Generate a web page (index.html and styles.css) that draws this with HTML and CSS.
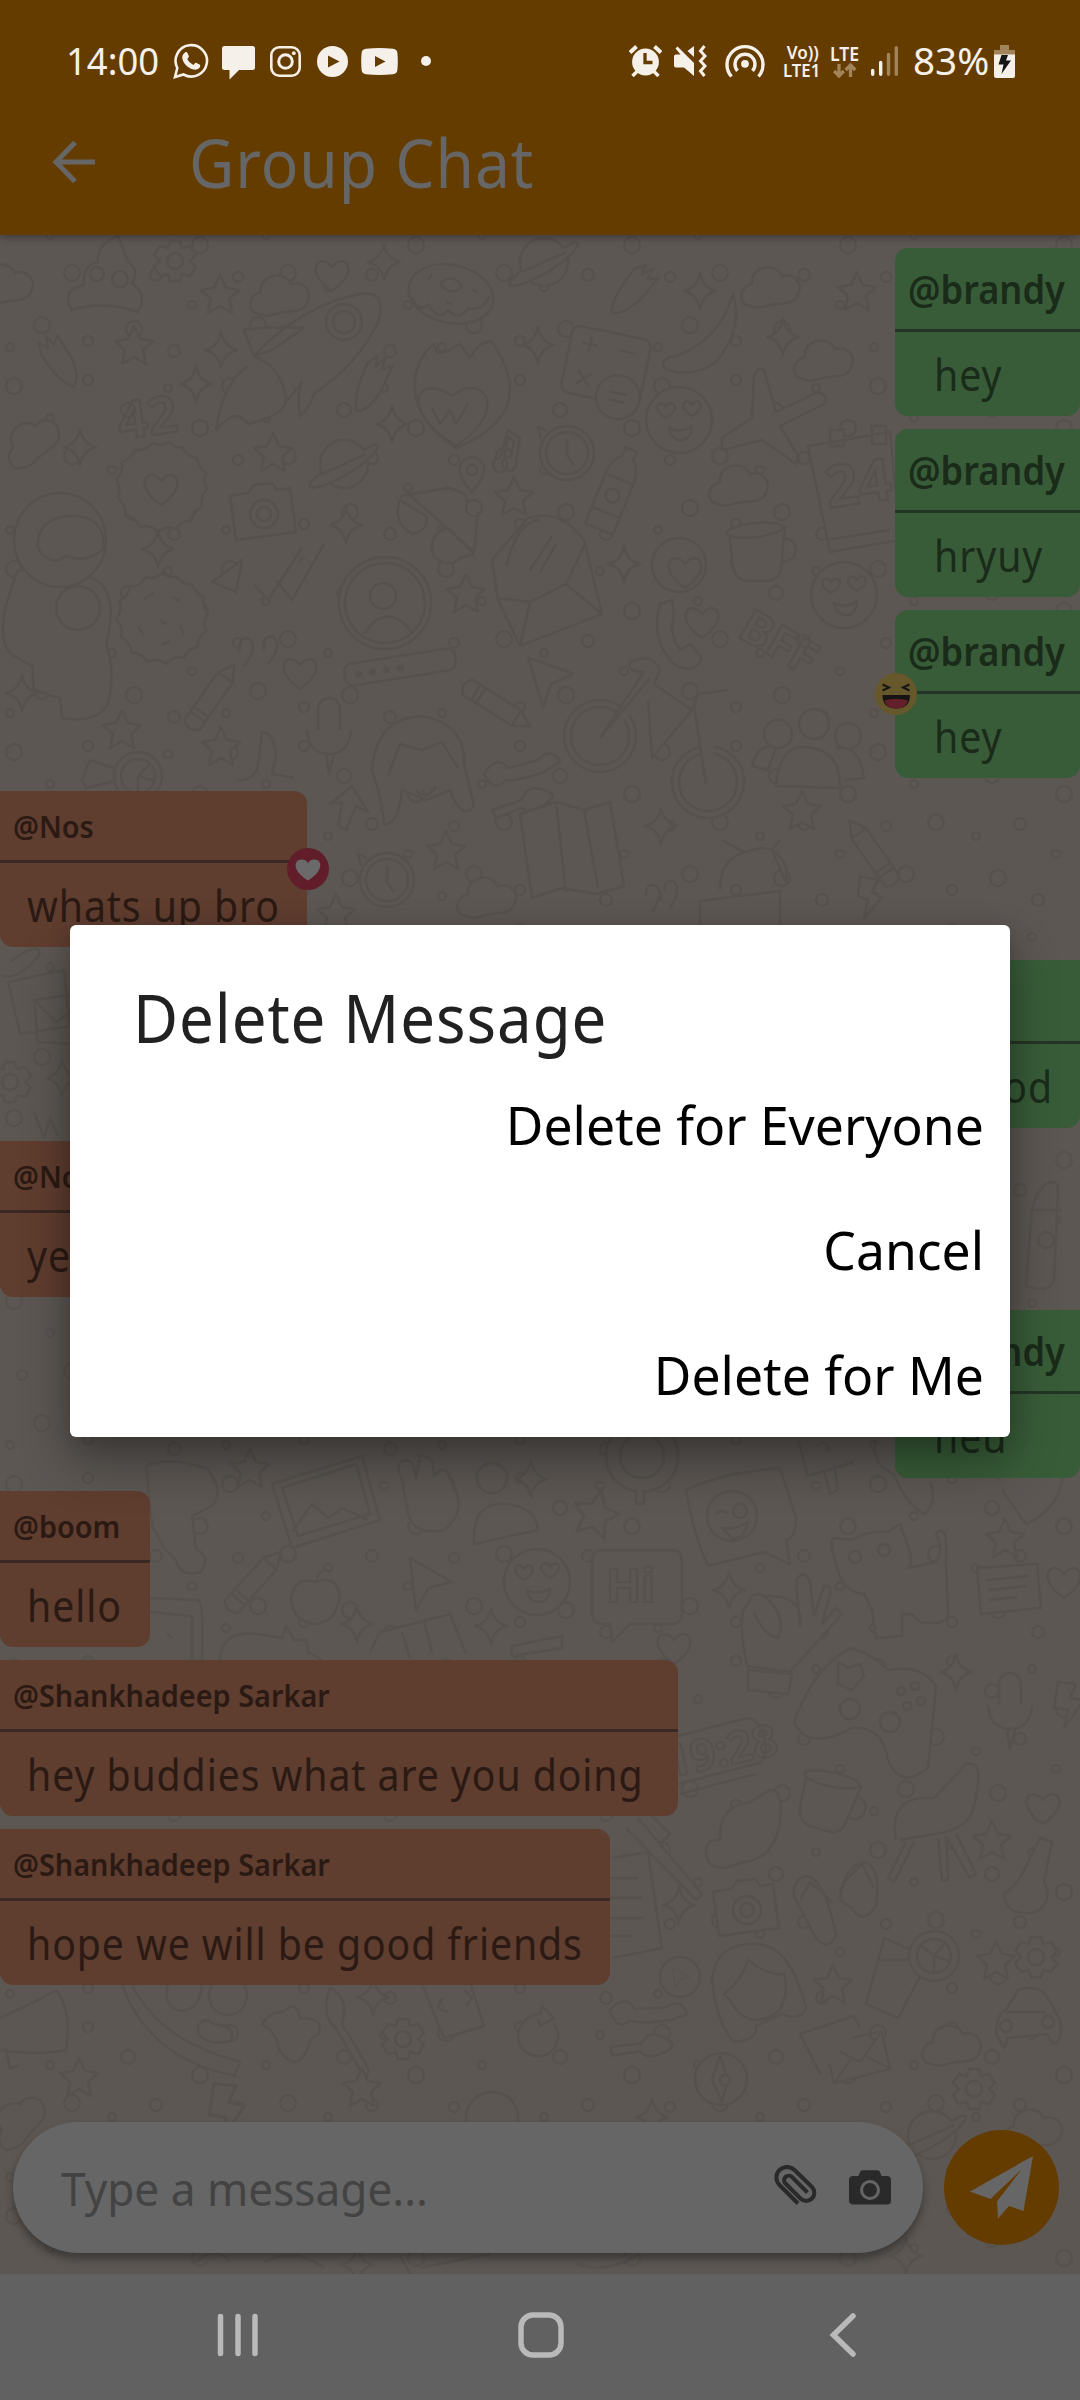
FILE: index.html
```html
<!DOCTYPE html>
<html lang="en">
<head>
<meta charset="utf-8">
<title>Group Chat</title>
<link rel="stylesheet" href="styles.css">
</head>
<body>
<div class="screen">
  <header class="top">
    <div class="status">
      <span class="clock"><span class="t t-clock">14:00</span></span>
      <svg class="i-wa" width="36" height="36" viewBox="0 0 36 36"><path d="M2 34l2.300-9A15.700 15.700 0 1 1 10.500 31.500z" fill="none" stroke="#f5f0ea" stroke-width="2.600"/><path d="M12 9.500c1-.8 2-.4 2.500.6l1.300 3c.3.900-.2 1.500-1.500 3 1.500 3 3.500 4.600 6.300 5.900 1.500-1.900 2-2.400 2.900-2l3.100 1.600c.9.500.7 1.700.2 2.700-1 1.900-3.600 2.800-6 2.300C14.500 25.200 9.500 19.500 9.200 14.500c0-2 1.200-4 2.800-5z" fill="#f5f0ea"/></svg>
      <svg class="i-msg" width="33" height="34" viewBox="0 0 33 34"><path d="M2.500 0h28Q33 0 33 2.500V21.500Q33 24 30.500 24H17L7.500 33.500V24H2.500Q0 24 0 21.500V2.500Q0 0 2.500 0z" fill="#f5f0ea"/></svg>
      <svg class="i-ig" width="31" height="31" viewBox="0 0 31 31" fill="none" stroke="#f5f0ea"><rect x="1.300" y="1.300" width="28.400" height="28.400" rx="8" stroke-width="2.600"/><circle cx="15.500" cy="15.500" r="6.800" stroke-width="3"/><circle cx="23.800" cy="7.200" r="1.900" fill="#f5f0ea" stroke="none"/></svg>
      <svg class="i-pl" width="31" height="31" viewBox="0 0 31 31"><circle cx="15.500" cy="15.500" r="15.500" fill="#f5f0ea"/><path d="M11 9.500L22.500 15.500 11 21.500z" fill="#653c00"/></svg>
      <svg class="i-yt" width="37" height="27" viewBox="0 0 37 27"><path d="M5 .8Q18.500-.6 32 .8 36 1.200 36.400 5 37.200 13.500 36.400 22 36 25.800 32 26.200 18.500 27.600 5 26.200 1 25.800.6 22-.2 13.500.6 5 1 1.200 5 .8z" fill="#f5f0ea"/><path d="M14 8L24.500 13.500 14 19z" fill="#653c00"/></svg>
      <i class="dot"></i>
      <span class="grow"></span>
      <svg class="i-al" width="33" height="32" viewBox="0 0 33 32"><circle cx="16.500" cy="17" r="13.400" fill="#f5f0ea"/><path d="M8.500 26l-5 5M24.500 26l5 5" stroke="#f5f0ea" stroke-width="3.500"/><path d="M1 7.500L7.500 1.500M32 7.500L25.500 1.500" stroke="#f5f0ea" stroke-width="4"/><path d="M16 8v9.500h7.500" stroke="#653c00" stroke-width="3.300" fill="none"/></svg>
      <svg class="i-mu" width="33" height="32" viewBox="0 0 33 32"><path d="M0 11.500Q0 9.500 2 9.500H6.500L1.500 3.500 3.500 1.500 20 18V31L10 22.500H2Q0 22.500 0 20.500zM20 1V12L13.500 6z" fill="#f5f0ea"/><path d="M30.500 1L26.500 6l4.500 5-4.500 5 4.500 5-4.500 5 4 5" fill="none" stroke="#f5f0ea" stroke-width="3"/></svg>
      <svg class="i-ho" width="40" height="34" viewBox="0 0 40 34" fill="none" stroke="#f5f0ea" stroke-width="3.400"><path d="M6.500 32.500A18 18 0 1 1 33.500 32.500"/><path d="M12.500 26.800A10 10 0 1 1 27.500 26.800"/><circle cx="20" cy="19.800" r="3.900" fill="#f5f0ea" stroke="none"/></svg>
      <span class="volte"><span class="t t-vo">Vo))</span><span class="t t-lte1">LTE1</span></span>
      <span class="lte"><span class="t t-lte">LTE</span>
      <svg width="24" height="15" viewBox="0 0 24 15"><path d="M6 1v12M1.200 8L6 13l4.800-5M17.500 14V2M12.700 7l4.800-5 4.800 5" fill="none" stroke="#a1845a" stroke-width="3.300"/></svg></span>
      <svg class="i-sg" width="27" height="30" viewBox="0 0 27 30" stroke-width="3.400" stroke-linecap="round"><path d="M1.700 24.500V28.300M9.700 16.500V28.300" stroke="#f5f0ea"/><path d="M17.500 8.500V28.300M25.300 1.800V28.300" stroke="#a1845a"/></svg>
      <span class="pct"><span class="t t-pct">83%</span></span>
      <svg class="i-ba" width="21" height="33" viewBox="0 0 21 33"><path d="M6 0h9v5h6v5H0V5h6z" fill="#a1845a"/><path d="M0 9.500H21V31q0 2-2 2H2q-2 0-2-2z" fill="#f5f0ea"/><path d="M7.500 10h6.500l-2 5.500h5L7.500 29l2-9.500H4.500z" fill="#151515"/></svg>
    </div>
    <div class="bar">
      <svg class="back" width="44" height="44" viewBox="0 0 44 44"><path d="M23 2.500L4 22 23 41.500M4 22H43" fill="none" stroke="#666" stroke-width="5"/></svg>
      <span class="t t-title">Group Chat</span>
    </div>
  </header>

  <main class="chat">
    <svg class="paper" width="1080" height="2039" viewBox="0 235 1080 2039">
      <defs>
        <pattern id="dots" width="216" height="183" patternUnits="userSpaceOnUse"><g class="ln"><circle cx="14" cy="20" r="8"/><circle cx="50" cy="52" r="4"/><circle cx="88" cy="14" r="5"/><circle cx="128" cy="44" r="7"/><circle cx="168" cy="22" r="4"/><circle cx="200" cy="62" r="8"/><circle cx="22" cy="94" r="5"/><circle cx="72" cy="90" r="8"/><circle cx="112" cy="104" r="4"/><circle cx="156" cy="92" r="6"/><circle cx="192" cy="122" r="4"/><circle cx="42" cy="142" r="8"/><circle cx="88" cy="158" r="5"/><circle cx="134" cy="146" r="8"/><circle cx="174" cy="168" r="6"/><circle cx="10" cy="164" r="4"/></g></pattern>
        <g id="cloud"><path d="M-22 18C-36 16-32-2-20-4-22-22 4-26 10-12 24-16 32-2 26 6 24 18 4 14-6 18-12 20-18 20-22 18z"/></g>
        <g id="star"><path d="M0-19L6-6 19-4 9 5 12 19 0 12-12 19-9 5-19-4-6-6z"/></g>
        <g id="spark"><path d="M0-18Q3-3 16 0 3 3 0 18-3 3-16 0-3-3 0-18z"/></g>
        <g id="heart"><path d="M0 16C-30-4-12-24 0-8 12-24 30-4 0 16z"/></g>
        <g id="planet"><circle r="24"/><path d="M-22 8C-46 26-34 30 0 12 36-8 44-30 20-14M-22 10L22-10"/></g>
        <g id="smile"><circle r="33"/><path d="M-13-2C-30-12-18-22-13-13-8-22 4-12-13-2zM13-4C-4-14 8-24 13-15 18-24 30-14 13-4zM-10 8Q2 14 13 6 12 20 2 20-8 20-10 8z"/></g>
        <g id="camera"><path d="M-32-16L-14-19-8-27 10-29 15-22 28-24 34 20-26 28z"/><circle cx="2" cy="2" r="14"/><circle cx="2" cy="2" r="7"/></g>
        <g id="clockd"><circle r="27"/><circle r="21"/><path d="M0-14V2L7 12M-20-22l-9-4 3 12"/></g>
        <g id="gear"><path d="M-5-20h10l2 7 8-2 6 9-6 6 6 6-6 9-8-2-2 7h-10l-2-7-8 2-6-9 6-6-6-6 6-9 8 2z"/><circle r="8"/></g>
        <g id="pencil"><path d="M-9-30L0-46 9-30V28Q0 36-9 28zM-9-30H9M-9 18H9M-9 12H9"/></g>
        <g id="cup"><path d="M-28-20L28-26 24 16Q22 28 6 28L-10 28Q-22 26-24 14zM27-14C44-16 42 12 25 8"/><ellipse cy="-23" rx="28" ry="7" transform="rotate(-6)"/></g>
        <g id="env"><path d="M-36-20L36-26 40 22-32 30zM-36-20L4 8 36-26M-32 30L-6 2M40 22L12 2"/></g>
        <g id="mic"><rect x="-11" y="-32" width="22" height="44" rx="11"/><path d="M-22 0Q-20 24 0 24 20 24 22 0M-3 24L0 44 5 24"/></g>
        <g id="tools"><path d="M-38 4Q-26-16-14-2L16-10Q30-24 38-8L22 2Q-8 12-16 10-28 24-38 4zM-30 40L0 30Q4 14 22 20 38 24 24 34 8 46 0 38L-26 48z"/></g>
        <g id="cursor"><path d="M-18-24L24 0 0 6-12 28z"/></g>
        <g id="note"><path d="M-30-20L30-24 34 20-26 26zM-20-8L22-12M-19 2L20-2M-18 12L10 9"/></g>
        <g id="bolt"><path d="M-10-22L8-20 2-6 16-4-4 24 0 6-14 4z"/></g>
        <g id="cookie"><path d="M0-46Q8-40 14-43 20-34 30-35 33-26 42-22 40-12 46-6 40 2 44 12 36 18 35 28 26 29 22 39 12 36 4 45-4 38-14 43-20 34-30 34-31 24-41 18-38 8-46 0-39-8-43-18-34-22-32-32-22-32-16-42-8-39 0-46z"/></g>
        <g id="chips"><path d="M-18-20l10-6M10-22l8 4M-24 8l6 8M18 6l4 10M-2 0l6 6M0 26l8-4"/></g>
      </defs>
      <rect y="235" width="1080" height="2039" fill="#5c5753"/>
      <rect y="235" width="1080" height="2039" fill="url(#dots)"/>
      <g class="ln fl">
        <use href="#cloud" x="5" y="285"/><path d="M72 310Q60 290 84 285 82 265 98 262 96 245 118 236 124 250 128 262 140 270 132 284 148 292 138 312 104 300 72 310z"/><circle cx="97" cy="274" r="7"/><circle cx="120" cy="279" r="8"/><use href="#gear" x="175" y="261"/><use href="#cloud" x="281" y="296"/><use href="#star" x="220" y="294"/><use href="#heart" x="332" y="275"/><use href="#spark" x="384" y="262"/>
        <ellipse cx="451" cy="294" rx="43" ry="29" transform="rotate(12 451 294)"/><path d="M412 298q8 16 16 6 10 18 20 6 12 12 20-2 14 4 22-12M440 284q12-12 22 2-10 12-22-2M428 280l4-6M472 290l6 2M446 302l6 2"/>
        <use href="#planet" x="544" y="262"/><g transform="translate(631 292) rotate(40)"><path d="M-12-20L-6-30-3-20 2-32 4-20 12-28 12 0Q8 26-2 28-12 14-12-20z"/></g><use href="#spark" x="700" y="291"/><use href="#cloud" x="772" y="288"/><use href="#star" x="857" y="291"/>
        <g transform="translate(60 362) rotate(-32)"><path d="M-12-16L-8-28-3-18 2-30 4-18 12-24 12 4Q8 26-2 28-12 14-12-16z"/></g><use href="#star" x="134" y="345"/><use href="#spark" x="221" y="350"/>
        <path d="M254 356Q300 306 360 294 388 290 378 322 360 362 314 394 310 408 300 416 296 396 302 382L286 402Q284 368 254 356zM254 356L244 330Q272 326 304 328L272 350zM248 366Q222 384 216 430 236 406 248 424 282 416 286 402"/><circle cx="344" cy="322" r="18"/><circle cx="344" cy="322" r="11"/>
        <g transform="translate(370 386) rotate(25)"><path d="M-12-20L-6-30-3-20 2-32 4-20 12-28 12 0Q8 26-2 28-12 14-12-20z"/></g>
        <path d="M456 448C400 412 410 362 434 344 436 360 446 352 460 344L470 358Q480 340 492 342 520 382 504 412 488 436 456 448z"/><path d="M456 446C396 408 418 372 452 396 482 372 512 408 456 446zM432 408l8 16 10-14 6 14 12-20"/>
        <use href="#spark" x="538" y="345"/><g transform="translate(606 366) rotate(12)"><rect x="-40" y="-34" width="80" height="68" rx="8"/><path d="M-28-18h16M-20-26v16M10-18h16M-26 10l14 14M-12 10L-26 24"/><circle cx="18" cy="28" r="22"/><path d="M10 24h16M10 32h16"/></g>
        <path d="M733 294Q744 328 716 362 690 380 664 368 660 358 676 356 720 340 733 294z"/><use href="#spark" x="783" y="337"/><use href="#cloud" x="825" y="361"/><use href="#cloud" x="33" y="441" transform="rotate(-30 33 441)"/><use href="#spark" x="80" y="447"/><use href="#spark" x="196" y="384"/><use href="#star" x="273" y="452"/><use href="#planet" x="344" y="464"/><use href="#spark" x="392" y="424"/>
        <path d="M500 458l8-28 12 8-4 24a7 7 0 1 1-5-5l3-16-6-4-4 22a7 7 0 1 1-4-1z"/><use href="#clockd" x="567" y="453"/><path d="M472 492Q452 470 464 460 476 452 484 466 486 476 472 492z"/><circle cx="472" cy="470" r="5"/><use href="#smile" x="679" y="420"/>
        <path d="M764 370Q758 366 754 376L752 418 722 438 722 450 762 440 796 464 798 456 780 426 824 404Q830 396 818 392L776 412z"/>
        <path d="M808 446L890 432 900 540 830 552zM826 540L890 530M830 430h14v16h-14zM872 426h14v18h-14z"/><use href="#cookie" x="161" y="487" transform="rotate(10 161 487)"/><use href="#heart" x="161" y="489"/><use href="#camera" x="262" y="512"/>
        <path d="M400 496l48-8q22 4 18 14M478 512l-4 40M400 500q-8 22 12 34 18-4 14-18zM448 528q-22 6-14 28 14 14 26 2l14-4zM404 490L474 552"/><use href="#star" x="514" y="496"/><g transform="translate(614 492) rotate(22)"><path d="M-15-14Q-14-32-6-36V-46H6V-36Q14-32 15-14V40H-15zM-15-14H15M-15 22H15"/><circle r="7" cy="4"/></g><use href="#cloud" x="740" y="486"/><use href="#cup" x="757" y="553"/>
        <path d="M18 570Q-10 640 14 656L32 666 34 690 60 698 62 718Q96 724 108 704 116 670 106 644 120 590 92 578z"/><ellipse cx="60" cy="540" rx="46" ry="47"/><path d="M38 548Q36 518 70 516 104 514 104 548 88 564 66 556 50 568 38 548z"/><circle cx="78" cy="608" r="22"/><use href="#spark" x="346" y="525"/><use href="#spark" x="158" y="549"/><use href="#cookie" x="162" y="619"/><use href="#chips" x="162" y="619"/>
        <path d="M254 584l14 16 34-52M276 580l16 20 32-56M242 560l-30 22 24 10z"/><circle cx="385" cy="603" r="46"/><circle cx="385" cy="603" r="40"/><circle cx="383" cy="596" r="13"/><path d="M364 634Q386 600 412 632"/><use href="#star" x="466" y="593"/>
        <path d="M498 600L492 560 528 518Q560 508 584 540L602 614 520 646zM498 598L530 602 566 584 602 614M530 602L520 646M566 584L584 546M506 566Q518 520 540 520M530 570l22-34M540 572l16-28"/><use href="#spark" x="624" y="564"/><circle cx="679" cy="565" r="27"/><use href="#heart" x="685" y="572"/><use href="#smile" x="844" y="595"/>
        <path d="M660 604Q650 640 674 664 694 676 702 658L690 644 680 650Q668 632 674 616L672 600z"/><use href="#heart" x="702" y="622"/><path d="M240 652q-2-14 8-14 12 8-4 28M264 650q-2-14 8-14 12 8-4 28"/><use href="#heart" x="300" y="673"/><use href="#pencil" transform="translate(208 702) rotate(35)"/><rect x="344" y="656" width="112" height="22" rx="8" transform="rotate(-9 400 667)"/><path d="M358 674h1M372 672h1M386 670h1M400 668h1" stroke-width="6" stroke-linecap="round"/><use href="#pencil" transform="translate(491 702) rotate(122)"/><use href="#cursor" transform="translate(550 678) rotate(-10)"/>
        <circle cx="600" cy="736" r="36"/><circle cx="600" cy="736" r="29"/><circle cx="708" cy="782" r="36"/><circle cx="708" cy="782" r="29"/><path d="M600 738l44-66q-18 0-14-10 22-10 30 8l-6 14 38 26-40 48-4-58M706 784l-12-78 4-12 30-4M600 738l50-60"/><use href="#mic" x="329" y="730"/><use href="#spark" x="22" y="693"/><use href="#star" x="122" y="729"/><use href="#star" x="221" y="746"/>
        <path d="M372 770Q376 718 422 716 466 724 464 764L474 806Q462 822 450 790L426 800 402 790Q398 826 384 824 382 800 372 770zM388 776l12-32 22 6 20-8 16 26M416 790q10 12 20-4"/><use href="#tools" x="522" y="770"/><circle cx="778" cy="734" r="14"/><circle cx="814" cy="724" r="15"/><circle cx="848" cy="736" r="13"/><path d="M776 786Q780 740 812 748 840 752 840 788zM752 766Q758 742 776 748L768 770zM836 748q24-4 28 30l-20 2"/>
        <path d="M82 780l8-20 46 16-50 12z"/><circle cx="138" cy="776" r="24"/><circle cx="138" cy="776" r="17"/><path d="M138 776l12-12M138 776v17M138 776l17 5M236 780q18 2 22-14l4-34q12 0 14 24l-4 18 22 4"/><path d="M330 804l22-18 16 26-12-6-10 24-8-4 4-24z"/><path d="M520 814l36-12 28 8 26-8 14 84-28 8-34-6-30 10zM556 802l10 90M584 810l14 78"/><use href="#star" x="446" y="850"/><use href="#clockd" x="387" y="880"/><use href="#cloud" x="488" y="898"/><use href="#star" x="336" y="913"/><use href="#spark" x="661" y="826"/><path d="M720 890Q720 860 744 852L722 840M744 852Q764 846 772 850L780 840M772 850Q790 862 786 882z"/><use href="#star" x="802" y="810"/><use href="#pencil" transform="translate(876 858) rotate(-35)"/><path d="M646 896q0-14 10-10 8 8-4 26M664 892q0-14 10-10 8 8-4 26M700 925v-24l80-10v34M860 876l18 4-6 12 10 6-18 20 4-18-10-4z"/>
        <path d="M8 982l56-12 6 56-50 8zM34 1000l42-6v50l-38-2zM34 1000l22 22 20-14M10 962q28-22 30-8-20 26-38 22"/><use href="#gear" x="10" y="1082"/><use href="#spark" x="62" y="1078"/><path d="M34 1112l10 26 6-20 8 18"/><path d="M1046 1184q12-6 12 6l-4 90q-4 14-28 6l6-76q4-18 14-26zM1034 1210h28"/><circle cx="1046" cy="1240" r="8"/>
      </g>
      <g class="ln fl">
        <path d="M146 1466Q170 1456 206 1468 226 1490 212 1506L192 1516 196 1548Q212 1560 200 1572 180 1578 176 1560L164 1548 152 1526z"/><use href="#star" x="250" y="1468"/><path d="M272 1484l90-28 18 64-88 28zM282 1488l74-24 14 50-72 22zM292 1532l20-28 16 14 14-10 26 12"/><path d="M402 1480q-8-18 4-20 8 0 10 18l4-22q14-2 14 20 12-14 16 4 20 30-6 50-30 6-36-16z"/><circle cx="492" cy="1478" r="15"/><path d="M474 1544Q472 1502 504 1504 536 1506 538 1530z"/><use href="#spark" x="531" y="1479"/><use href="#star" transform="translate(596 1513) rotate(14) scale(1.200)"/><circle cx="642" cy="1456" r="36"/><circle cx="642" cy="1456" r="22"/><path d="M636 1490v14h8v-14M798 1440l10 36 46-14M824 1470l6 24 8-4-4-26M876 1440q-6 24 18 34 12 30 30 40 14-10 6-32M1000 1480q-16-8 2-24l60-12q10 60-36 80l-24-34"/>
        <path d="M686 1490Q724 1472 780 1468L796 1518Q796 1538 786 1540L790 1564 764 1552 708 1566Q692 1530 686 1490z"/><circle cx="732" cy="1516" r="25"/><circle cx="740" cy="1511" r="7"/><path d="M716 1514q6-6 12 0M722 1528q14 2 26-6-4 18-16 16z"/><use href="#smile" x="537" y="1582"/><path d="M602 1550h70q10 0 10 12v50q0 12-10 12h-42l-18 18-2-18h-8q-10 0-10-12v-50q0-12 10-12z"/><use href="#spark" x="729" y="1590"/>
        <path d="M747 1666Q736 1612 748 1604 752 1590 764 1596 804 1594 800 1626L796 1580Q804 1568 810 1582L814 1616 824 1586Q834 1584 828 1602L822 1624 836 1608 842 1614 790 1672zM748 1670l44 4-4 20-40-4zM764 1596q24 20 14 42-14-2-24-26"/><path d="M837 1566Q828 1540 834 1538L852 1540Q868 1530 888 1532L900 1524 908 1546Q914 1562 908 1568L936 1562Q944 1550 936 1534 948 1520 946 1560L948 1616Q944 1626 920 1622L912 1614 902 1614 902 1636 876 1638 872 1610 864 1594Q842 1592 837 1566z"/><circle cx="855" cy="1557" r="6"/><circle cx="884" cy="1550" r="6"/><use href="#note" x="1007" y="1588"/><use href="#star" x="1005" y="1538"/><use href="#heart" x="1064" y="1582"/>
        <path d="M794 1722Q812 1670 850 1648 870 1652 888 1670 922 1664 936 1686L928 1768Q900 1790 888 1760 884 1726 852 1728 808 1752 794 1722z"/><path d="M838 1662l10 6 12-4 4 12-12 14-14-6z"/><circle cx="850" cy="1709" r="10"/><circle cx="890" cy="1722" r="10"/><circle cx="901" cy="1691" r="4"/><circle cx="915" cy="1686" r="4"/><circle cx="907" cy="1706" r="4"/><circle cx="921" cy="1701" r="4"/><use href="#mic" x="1010" y="1705"/><use href="#bolt" x="1068" y="1704"/><use href="#spark" x="956" y="1672"/><path d="M670 1738l78-20q14 2 18 30 0 14-10 16l-78 20M680 1794l76-20"/>
        <use href="#cup" transform="translate(827 1802) rotate(18)"/><path d="M706 1852q0-14 14-12-2-34 30-38l20-12q14 0 10 30-4 38-36 42l-20 6q-18 0-18-16z"/><path d="M896 1840Q888 1794 934 1798L966 1764Q984 1760 976 1796 974 1830 934 1834L900 1840M906 1842l-18 36 6 4 20-40M938 1838l4 42h6l-2-44M956 1834l20 40-6 4-22-38"/><use href="#heart" x="1043" y="1808"/><use href="#star" x="992" y="1840"/><path d="M1040 1838l12 4-8 40q10 20-8 30-30 6-32-18 16-12 20-24z"/><path d="M638 1818l64 76-6 6-70-72M646 1810l24 24-8 8"/>
        <path d="M612 1858l36-6 14 96-50 10"/><path d="M610 1878h28M610 1898h32M610 1918h34M610 1936h22"/><use href="#spark" x="679" y="1905"/><use href="#camera" x="745" y="1908"/><path d="M794 1896q-2-18 14-20 18 6 28 60-8 16-20 2zM840 1900q4-34 24-38 18 4 12 44-14 20-24 2zM800 1900l10-18 22 20M842 1884l20-20 12 24"/><circle cx="680" cy="1977" r="20"/><use href="#cursor" transform="translate(680 1977) scale(.4)"/>
        <path d="M712 1980Q716 1942 756 1944 790 1944 806 2008 800 2022 782 2014L756 2026Q758 2040 734 2042 716 2022 712 1980z"/><path d="M724 1994q18-14 24-34 20 16 36 14 6 20-6 38-32 20-48-12z"/><use href="#star" x="833" y="1984"/><path d="M884 1938l46 20-32 60-32-14zM878 1960h48"/><circle cx="934" cy="1956" r="25"/><circle cx="934" cy="1956" r="17"/><path d="M934 1956l10-12M934 1956l16 5M934 1956v16M934 1956l-12-10"/><use href="#star" x="996" y="1960"/><use href="#gear" x="1036" y="1957"/>
        <path d="M996 2034Q996 2014 1006 2010L1018 1990Q1040 1982 1050 2002L1060 2020Q1064 2040 1054 2044L1046 2034 1008 2038 1004 2048zM1006 2012h40"/><circle cx="1006" cy="2026" r="6"/><circle cx="1048" cy="2022" r="6"/><use href="#cloud" x="953" y="2046"/><use href="#env" transform="translate(856 2056) rotate(-8) scale(.8)"/><path d="M820 2074l-20-40 54-18 6 12"/><circle cx="721" cy="2079" r="26"/><path d="M720 2056l8 24-6 22-10-22z"/><use href="#gear" x="974" y="2089"/><use href="#tools" transform="translate(648 2014) rotate(12)"/><path d="M524 2022a20 20 0 1 0 30 2M524 2022q6-8 16-8l2-8 12 12-14 8-2-7"/>
        <use href="#pencil" transform="translate(250 1586) rotate(42)"/><path d="M316 1582q20-8 24 14-4 26-24 28-22-2-25-24 2-24 25-18zM316 1582q4-16 14-10"/><use href="#cursor" x="428" y="1582"/><use href="#spark" x="357" y="1624"/><use href="#spark" x="491" y="1626"/><path d="M150 1598l48 2q6 2 4 60M150 1612l42 4v44M220 1660q0-30 38-26l24 4 4-12 8 14 12 0 2 12 14 8M370 1652l10-20 70-18 16 40M402 1632l8 26M424 1622l8 30M512 1646l50-10v12l-50 8z"/><use href="#heart" x="674" y="1648"/>
        <path d="M0 2018Q40 2000 56 1990 72 2010 66 2050 40 2056 0 2050M6 2048l4 20 8-2"/><path d="M122 1985Q150 2060 236 2076M132 1985Q160 2040 234 2060L240 2062 234 2076M168 1985q-6 22 14 26 18-2 20-26M198 2026q6-10 16-2 22 2 18 16-20 8-34-6z"/><circle cx="228" cy="1996" r="19"/><path d="M262 2024q10-14 22-12 12-14 16 6 26 0 18 16-10 6-10 14-12 28-30 0 0-14-16-24zM330 1988q20 10 12 36l24 40q6 14-4 10l-26-46q-16-12-6-40z"/><use href="#gear" x="403" y="2039"/><path d="M422 1984l48-2 14 44-40 12zM442 1998l-4 10 10 4M464 1990l8 8-6 8"/><use href="#spark" x="373" y="1997"/><use href="#star" x="79" y="2077"/><use href="#star" x="362" y="2087"/><use href="#bolt" transform="translate(226 2110) scale(1.200)"/><use href="#cloud" transform="translate(20 2120) rotate(-40)"/><use href="#planet" x="932" y="2135"/><use href="#cloud" x="1034" y="2130"/><circle cx="492" cy="2118" r="26"/><circle cx="725" cy="2080" r="5"/><use href="#spark" x="652" y="2117"/><use href="#spark" x="357" y="2265"/><path d="M400 2256l14 24M420 2268l70-14M196 2262q20-18 34 0M264 2262q30-16 60 6M576 2264q30 10 60-8"/><use href="#spark" x="906" y="2256"/>
      </g>
      <g class="wt"><text x="118" y="436" font-size="52" transform="rotate(-8 146 420)">42</text><text x="826" y="504" font-size="58" transform="rotate(-8 855 490)">24</text><text x="736" y="636" font-size="46" transform="rotate(30 736 636)">BFF</text><text x="606" y="1602" font-size="46">Hi</text><text x="664" y="1766" font-size="44" transform="rotate(-12 722 1747)">19:28</text></g>
    </svg>

    <div class="msgs">
      <div class="m out"><div class="who"><span class="t t-me">@brandy</span></div><div class="txt"><span class="t t-body">hey</span></div></div>
      <div class="m out"><div class="who"><span class="t t-me">@brandy</span></div><div class="txt"><span class="t t-body">hryuy</span></div></div>
      <div class="m out"><div class="who"><span class="t t-me">@brandy</span></div><div class="txt"><span class="t t-body">hey</span></div>
        <svg class="react r-left" width="42" height="42" viewBox="0 0 42 42"><circle cx="21" cy="21" r="21" fill="#66582a"/><path d="M7.500 11.500L14 14.500 7.500 17.500M34.500 11.500L28 14.500 34.500 17.500" fill="none" stroke="#151515" stroke-width="2"/><path d="M7.500 22H35Q35 35.500 21.200 35.500 7.500 35.500 7.500 22z" fill="#151515"/><path d="M9.500 27.500Q21 24 33 27.500 31 35.500 21.200 35.500 11.500 35.500 9.500 27.500z" fill="#64202a"/></svg></div>
      <div class="m in w1"><div class="who"><span class="t t-they">@Nos</span></div><div class="txt"><span class="t t-body">whats up bro</span></div>
        <svg class="react r-right" width="42" height="42" viewBox="0 0 42 42"><circle cx="21" cy="21" r="21" fill="#611d29"/><path d="M21 32.500C5 23 6.500 11.500 14.500 11.500 18 11.500 20 13 21 15.500 22 13 24 11.500 27.500 11.500 35.500 11.500 37 23 21 32.500z" fill="#6a6a6a"/></svg></div>
      <div class="m out w2"><div class="who"><span class="t t-me">@brandy</span></div><div class="txt"><span class="t t-body">good</span></div></div>
      <div class="m in w3"><div class="who"><span class="t t-they">@Nos</span></div><div class="txt"><span class="t t-body">yes</span></div></div>
      <div class="m out"><div class="who"><span class="t t-me">@brandy</span></div><div class="txt"><span class="t t-body">heu</span></div></div>
      <div class="m in w3"><div class="who"><span class="t t-they">@boom</span></div><div class="txt"><span class="t t-body">hello</span></div></div>
      <div class="m in w4"><div class="who"><span class="t t-they">@Shankhadeep Sarkar</span></div><div class="txt"><span class="t t-body">hey buddies what are you doing</span></div></div>
      <div class="m in w5"><div class="who"><span class="t t-they">@Shankhadeep Sarkar</span></div><div class="txt"><span class="t t-body">hope we will be good friends</span></div></div>
    </div>

    <div class="compose">
      <div class="field">
        <span class="t t-ph">Type a message...</span>
        <span class="grow"></span>
        <svg class="clip" width="44" height="42" viewBox="0 0 44 42"><path d="M24 38.500L5.500 20A10.500 10.500 0 0 1 20.500 5L38 22A8 8 0 0 1 26.500 33.500L11.500 18.500A4.500 4.500 0 0 1 18 12L33.500 27.500" fill="none" stroke="#2a2a2a" stroke-width="4"/></svg>
        <svg width="42" height="35" viewBox="0 0 42 35"><path d="M4 6H9.500L11 2Q11.800 .3 13.500 .3H28.500Q30.200 .3 31 2L32.500 6H38Q42 6 42 10V30.500Q42 34.500 38 34.500H4Q0 34.500 0 30.500V10Q0 6 4 6z" fill="#2a2a2a"/><circle cx="21" cy="20" r="8.500" fill="#2a2a2a" stroke="#666" stroke-width="3"/></svg>
      </div>
      <svg class="send" width="115" height="115" viewBox="0 0 115 115"><circle cx="57.500" cy="57.500" r="57.500" fill="#653c00"/><path d="M26 61.500L89 26 79.500 81 65 76 54 88.500 53 71.500 77.500 39.500 46.500 69z" fill="#666"/></svg>
    </div>
  </main>

  <nav class="nav">
    <svg width="42" height="46" viewBox="0 0 42 46" stroke="#b9b9b9" stroke-width="5.500" stroke-linecap="round"><path d="M3.500 4.500V41.500M21 4.500V41.500M38 4.500V41.500"/></svg>
    <svg class="home" width="48" height="48" viewBox="0 0 48 48"><rect x="4" y="4" width="40" height="40" rx="12" fill="none" stroke="#b9b9b9" stroke-width="5.500"/></svg>
    <svg width="28" height="46" viewBox="0 0 28 46"><path d="M24 4L4.500 23 24 42" fill="none" stroke="#b9b9b9" stroke-width="5.500" stroke-linecap="round"/></svg>
  </nav>

  <div class="dialog">
    <div class="dtitle"><span class="t t-dt">Delete Message</span></div>
    <div class="opt"><span class="t t-opt">Delete for Everyone</span></div>
    <div class="opt"><span class="t t-opt">Cancel</span></div>
    <div class="opt"><span class="t t-opt">Delete for Me</span></div>
  </div>
</div>
</body>
</html>
```
FILE: styles.css
```css
* { box-sizing: border-box; }
body { margin: 0; font-family: "Noto Sans", "Open Sans", sans-serif; }
svg { display: block; flex: none; }
.screen { position: relative; width: 1080px; height: 2400px; display: flex; flex-direction: column; overflow: hidden; background: #616161; }
.t { display: inline-block; white-space: nowrap; transform-origin: 0 50%; }
.grow { flex: 1; }

/* header */
.top { position: relative; z-index: 1; height: 235px; background: #653c00; box-shadow: 0 2px 8px rgba(0, 0, 0, .35); }
.status { height: 122px; padding: 0 65px 0 66px; display: flex; align-items: center; color: #f5f0ea; }
.clock { width: 107px; padding-bottom: 3px; }
.t-clock { font-size: 39px; transform: scaleX(.935); }
.i-msg { margin: 3px 0 0 13px; }
.i-ig { margin-left: 15px; }
.i-pl { margin-left: 16px; }
.i-yt { margin-left: 13px; }
.dot { width: 10px; height: 10px; border-radius: 50%; background: #f5f0ea; margin-left: 23px; }
.i-mu { margin-left: 12px; }
.i-ho { margin-left: 18px; }
.volte { width: 39px; margin: 0 0 0 18px; display: flex; flex-direction: column; gap: 1px; font-weight: 600; }
.volte .t { font-size: 18px; line-height: 17px; }
.t-vo { padding-left: 4px; transform: scaleX(.95); }
.t-lte1 { transform: scaleX(.93); }
.lte { width: 30px; margin-left: 8px; display: flex; flex-direction: column; font-weight: 600; }
.lte .t { font-size: 19px; line-height: 18px; transform: scaleX(.93); }
.lte svg { margin: 0 0 0 3px; }
.i-sg { margin-left: 11px; }
.pct { width: 81px; margin-left: 15px; padding-bottom: 3px; }
.t-pct { font-size: 39px; transform: scaleX(.99); }
.bar { height: 80px; padding-left: 52px; display: flex; align-items: center; color: #666; }
.t-title { font-size: 67px; line-height: 80px; margin-left: 93px; letter-spacing: 1px; transform: scaleX(.93); }

/* conversation */
.chat { height: 2039px; display: grid; grid-template-rows: 1fr 152px; }
.paper { grid-area: 1 / 1 / 3 / 2; }
.ln { fill: none; stroke: #56514d; stroke-width: 2.4; stroke-linejoin: round; }
.fl { fill: #5c5753; }
.wt { font-weight: 700; fill: none; stroke: #56514d; stroke-width: 2.2; }
.msgs { grid-area: 1 / 1; padding-top: 13px; display: flex; flex-direction: column; gap: 13px; }
.m { position: relative; }
.out { align-self: flex-end; width: 185px; height: 168px; background: #385c38; color: #1a2b1a; border-radius: 13px 0 13px 13px; }
.in { align-self: flex-start; height: 156px; background: #5f3d2f; color: #2b1a13; border-radius: 0 13px 13px 13px; }
.who { padding-left: 13px; font-weight: 600; }
.out .who { height: 84px; line-height: 81px; border-bottom: 3px solid #253525; }
.in .who { height: 72px; line-height: 70px; border-bottom: 3px solid #3a2822; }
.txt { padding-left: 27px; line-height: 86px; }
.out .txt { padding-left: 39px; }
.t-me { font-size: 40px; transform: scaleX(.905); }
.t-they { font-size: 31px; transform: scaleX(.931); }
.t-body { font-size: 43px; letter-spacing: 1px; transform: scaleX(.912); }
.w1 { width: 307px; }
.w2 { width: 300px; }
.w2 .txt { padding-right: 27px; text-align: right; }
.w2 .t-body { transform-origin: 100% 50%; }
.w3 { width: 150px; }
.w4 { width: 678px; }
.w5 { width: 610px; }
.react { position: absolute; }
.r-left { left: -20px; top: 63px; }
.r-right { right: -22px; top: 57px; }

/* message field */
.compose { grid-area: 2 / 1; padding: 0 21px 21px 13px; display: flex; align-items: center; justify-content: space-between; }
.field { width: 910px; height: 131px; padding: 0 32px 0 48px; border-radius: 66px; background: #666; box-shadow: 0 6px 9px rgba(0, 0, 0, .35); display: flex; align-items: center; color: #434343; }
.t-ph { font-size: 46px; line-height: 60px; transform: scaleX(.96); }
.clip { margin: 0 31px 3px 0; }

.nav { height: 126px; padding: 0 223px 4px 217px; display: flex; align-items: center; justify-content: space-between; }
.home { margin-right: 7px; }

/* dialog */
.dialog { position: absolute; z-index: 2; left: 70px; top: 925px; width: 940px; height: 512px; background: #fff; border-radius: 6px; box-shadow: 0 26px 50px rgba(0, 0, 0, .32), 0 4px 22px rgba(0, 0, 0, .15); color: #000; }
.dtitle { height: 138px; padding: 44px 0 0 63px; line-height: 96px; color: #212121; }
.t-dt { font-size: 67px; letter-spacing: 1px; transform: scaleX(.922); }
.opt { height: 125px; line-height: 124px; padding-right: 26px; text-align: right; }
.t-opt { font-size: 53px; transform-origin: 100% 50%; transform: scaleX(.974); }
```
